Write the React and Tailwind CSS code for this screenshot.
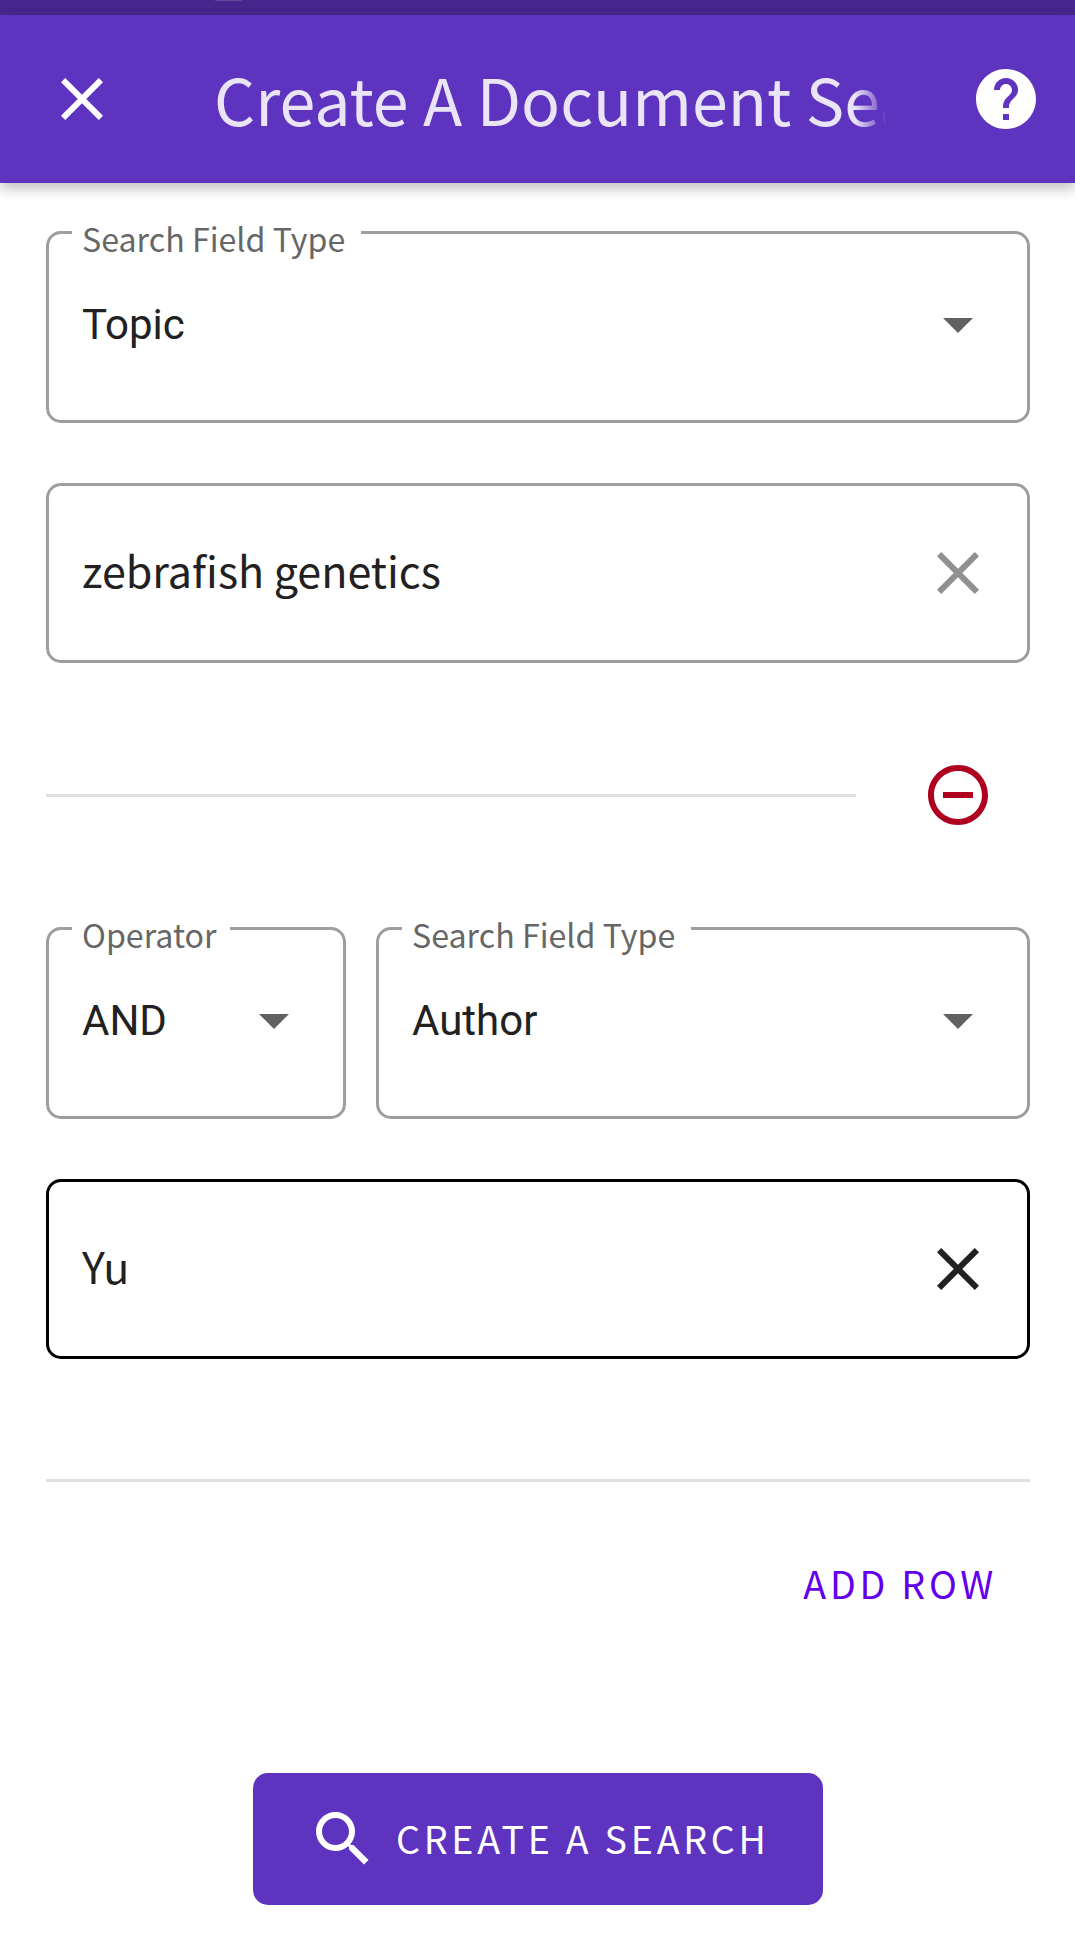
import { MdArrowDropDown, MdClose, MdHelp, MdRemoveCircleOutline, MdSearch } from 'react-icons/md';

function SelectField({ label, value, className, labelClass }) {
  return (
    <div className={`relative flex h-48 items-center justify-between rounded-[15px] border-3 border-[#9e9e9e] pb-1.5 pl-[33px] pr-[33px] ${className}`}>
      <span className={`absolute -top-3.5 left-[23px] bg-white pl-2.5 text-[32.2px] leading-9 text-[#666] whitespace-nowrap ${labelClass}`}>
        {label}
      </span>
      <span className="pt-[2px] font-[Roboto,sans-serif] text-[42px] leading-none text-[#212121]">{value}</span>
      <MdArrowDropDown className="size-18 shrink-0 text-[#616161]" />
    </div>
  );
}

function TextField({ value, active }) {
  return (
    <div className={`flex h-45 items-center justify-between rounded-[15px] border-3 pl-[33px] pr-[33px] ${active ? 'border-black' : 'border-[#9e9e9e]'}`}>
      <span className="pb-[7px] text-[43px] leading-none text-[#212121]">{value}</span>
      <MdClose className={`size-18 shrink-0 ${active ? 'text-[#212121]' : 'text-[#909090]'}`} />
    </div>
  );
}

export default function App() {
  return (
    <div className="h-[1943px] w-[1075px] overflow-hidden bg-white font-['Noto_Sans_CJK_SC','Noto_Sans',sans-serif]">
      {/* Status bar */}
      <div className="h-[15px] bg-[#46268c] pl-[215px]">
        <div className="h-px w-[27px] rounded-b-full bg-[#68499f]" />
      </div>

      {/* App bar */}
      <header className="flex h-42 items-center bg-[#5e33bf] pl-[46px] pr-[33px] text-white shadow-[0_6px_12px_rgba(0,0,0,0.24)]">
        <button type="button" aria-label="Close">
          <MdClose className="size-18" />
        </button>
        {/* Long titles fade out before the help icon */}
        <h1 className="ml-[95px] w-[674px] overflow-hidden pb-[2px] pl-px text-[64.5px] leading-[80px] whitespace-nowrap text-white/87 [mask-image:linear-gradient(to_right,#000_calc(100%-32px),transparent)]">
          Create A Document Search
        </h1>
        <button type="button" aria-label="Help" className="ml-auto">
          <MdHelp className="size-18" />
        </button>
      </header>

      <main className="flex flex-col pl-[46px] pr-[45px] pt-12">
        <SelectField label="Search Field Type" value="Topic" labelClass="w-[289px]" />
        <div className="mt-15">
          <TextField value="zebrafish genetics" />
        </div>

        <div className="my-24 flex items-center justify-between pr-9">
          <div className="h-[3px] w-[810px] bg-[#e0e0e0]" />
          <button type="button" aria-label="Remove row">
            <MdRemoveCircleOutline className="size-18 text-[#b00020]" />
          </button>
        </div>

        <div className="flex gap-[30px]">
          <SelectField label="Operator" value="AND" className="w-75" labelClass="w-[158px]" />
          <SelectField label="Search Field Type" value="Author" className="flex-1" labelClass="w-[289px]" />
        </div>
        <div className="mt-15">
          <TextField value="Yu" active />
        </div>

        <div className="mt-30 h-[3px] bg-[#e0e0e0]" />

        <button type="button" className="mt-[47px] self-end pr-[33px] text-[37.6px] leading-[108px] tracking-[3.75px] text-[#6200ee]">
          ADD ROW
        </button>

        <button type="button" className="mt-[136px] flex h-33 w-[570px] items-center self-center rounded-[15px] bg-[#5e33bf] pl-[54px] text-white">
          <MdSearch className="size-18" />
          <span className="ml-[17px] pb-[3px] text-[37.6px] leading-none tracking-[3.75px] whitespace-nowrap">CREATE A SEARCH</span>
        </button>
      </main>
    </div>
  );
}
